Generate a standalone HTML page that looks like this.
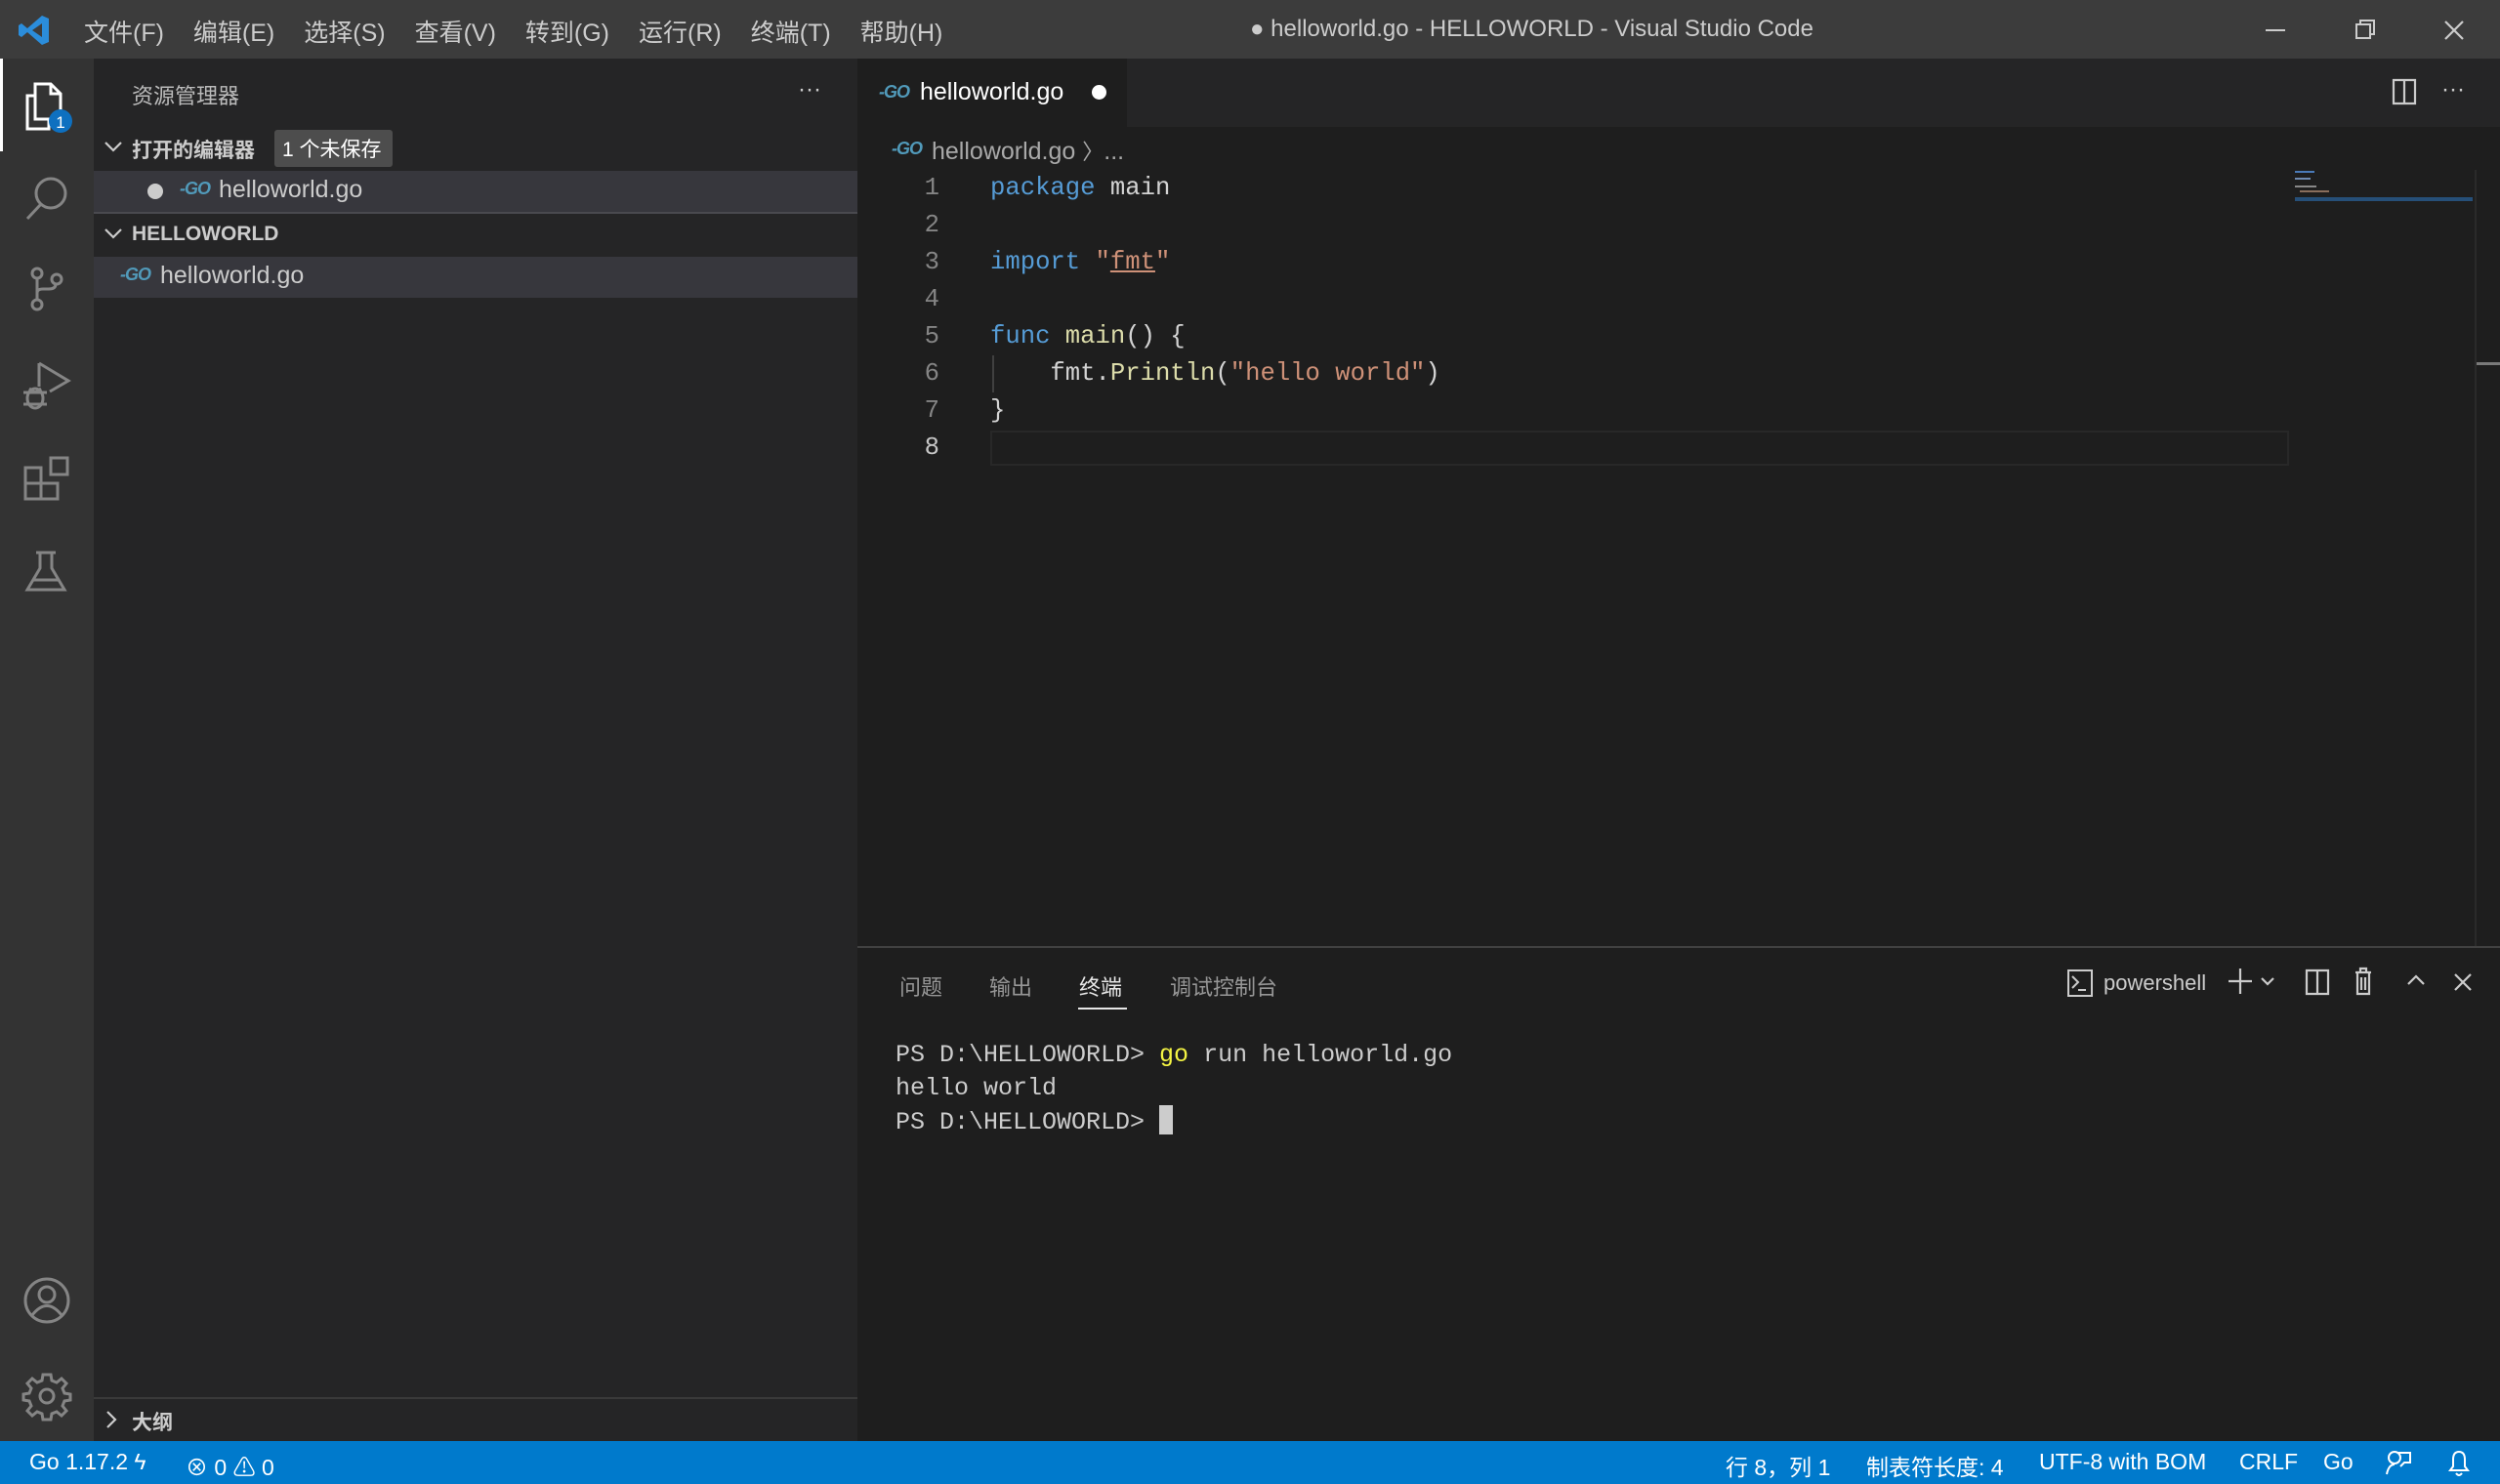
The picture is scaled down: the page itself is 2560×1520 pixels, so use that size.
<!DOCTYPE html>
<html><head><meta charset="utf-8"><style>
*{margin:0;padding:0;box-sizing:border-box}
body{width:2560px;height:1520px;overflow:hidden;background:#1e1e1e;font-family:"Liberation Sans","Noto Sans CJK SC",sans-serif;color:#ccc;position:relative}
.a{position:absolute;white-space:nowrap}
.mono{font-family:"Liberation Mono","Noto Sans CJK SC",monospace}
.go{font-style:italic;font-weight:bold;color:#519aba;font-size:18px;letter-spacing:-1px}
svg{position:absolute;overflow:visible}
</style></head><body>
<!-- title bar -->
<div class="a" style="left:0;top:0;width:2560px;height:60px;background:#3c3c3c"></div>
<svg style="left:18px;top:14px" width="34" height="34" viewBox="0 0 34 34"><path d="M25 2 L32 5 V29 L25 32 L10 19 L4 24 L1 22 V12 L4 10 L10 15 Z M25 10 L15 17 L25 24 Z" fill="#2b8ddb"/></svg>
<div class="a" style="left:86px;top:14px;font-size:25px;color:#ccc;word-spacing:0">
<span style="margin-right:30px">文件(F)</span><span style="margin-right:30px">编辑(E)</span><span style="margin-right:30px">选择(S)</span><span style="margin-right:30px">查看(V)</span><span style="margin-right:30px">转到(G)</span><span style="margin-right:30px">运行(R)</span><span style="margin-right:30px">终端(T)</span><span>帮助(H)</span></div>
<div class="a" style="left:1280px;top:16px;font-size:24px;color:#ccc">● helloworld.go - HELLOWORLD - Visual Studio Code</div>
<svg style="left:2320px;top:20px" width="220" height="24"><path d="M0 11 H20" stroke="#ccc" stroke-width="2"/><path d="M93 5 H107 V19 H93Z M97 5 V1 H111 V15 H107" stroke="#ccc" stroke-width="2" fill="none"/><path d="M184 2 L202 20 M202 2 L184 20" stroke="#ccc" stroke-width="2.2"/></svg>
<!-- activity bar -->
<div class="a" style="left:0;top:60px;width:96px;height:1416px;background:#333"></div>
<div class="a" style="left:0;top:60px;width:3px;height:95px;background:#fff"></div>
<svg style="left:24px;top:84px" width="48" height="52"><path d="M12 2 H28 L38 12 V38 H12Z M28 2 V12 H38" stroke="#fff" stroke-width="3" fill="none"/><path d="M12 14 H4 V48 H26 V38" stroke="#fff" stroke-width="3" fill="none"/><circle cx="38" cy="40" r="12" fill="#0e70c0"/><text x="38" y="47" fill="#fff" font-size="17" text-anchor="middle" font-family="Liberation Sans">1</text></svg>
<svg style="left:24px;top:178px" width="48" height="48" stroke="#858585" stroke-width="3" fill="none"><circle cx="28" cy="20" r="15"/><path d="M18 31 L4 46"/></svg>
<svg style="left:24px;top:272px" width="48" height="48" stroke="#858585" stroke-width="3" fill="none"><circle cx="14" cy="8" r="5"/><circle cx="14" cy="40" r="5"/><circle cx="34" cy="14" r="5"/><path d="M14 13 V35 M14 28 Q14 24 20 24 H26 Q33 24 33 19"/></svg>
<svg style="left:24px;top:370px" width="48" height="52" stroke="#858585" stroke-width="3" fill="none"><path d="M16 2 V26 M16 2 L46 20 L27 31"/><ellipse cx="12" cy="38" rx="8" ry="10"/><path d="M0 32 H24 M0 44 H24 M6 28 L12 32 M18 28 L12 32"/></svg>
<svg style="left:24px;top:467px" width="48" height="52" stroke="#858585" stroke-width="3" fill="none"><path d="M2 12 H18 V44 H2Z M2 28 H35 V44 H18"/><rect x="28" y="2" width="17" height="17"/></svg>
<svg style="left:24px;top:564px" width="48" height="50" stroke="#858585" stroke-width="3" fill="none"><path d="M13 2 H33 M17 2 V18 L4 40 H42 L29 18 V2 M10 30 H36"/></svg>
<svg style="left:24px;top:1308px" width="48" height="48" stroke="#858585" stroke-width="3" fill="none"><circle cx="24" cy="24" r="22"/><circle cx="24" cy="18" r="8"/><path d="M9 39 Q24 20 39 39"/></svg>
<svg style="left:22px;top:1404px" width="52" height="52" stroke="#858585" stroke-width="3" fill="none"><circle cx="26" cy="26" r="7"/><path d="M22 4 H30 L31 10 L36 12 L41 8 L46 13 L42 18 L44 23 L50 24 V30 L44 31 L42 36 L46 41 L41 46 L36 42 L31 44 L30 50 H22 L21 44 L16 42 L11 46 L6 41 L10 36 L8 31 L2 30 V24 L8 23 L10 18 L6 13 L11 8 L16 12 L21 10 Z"/></svg>
<!-- sidebar -->
<div class="a" style="left:96px;top:60px;width:782px;height:1416px;background:#252526"></div>
<div class="a" style="left:135px;top:81px;font-size:22px;color:#bbb">资源管理器</div>
<div class="a" style="left:817px;top:78px;font-size:24px;color:#ccc">···</div>
<svg style="left:106px;top:144px" width="20" height="14"><path d="M2 2 L10 10 L18 2" stroke="#ccc" stroke-width="2.2" fill="none"/></svg>
<div class="a" style="left:135px;top:138px;font-size:21px;color:#ccc;font-weight:bold">打开的编辑器</div>
<div class="a" style="left:281px;top:133px;width:121px;height:38px;background:#4d4d4d;border-radius:3px;font-size:21px;color:#fff;padding:4px 0 0 8px">1 个未保存</div>
<div class="a" style="left:96px;top:175px;width:782px;height:42px;background:#37373d"></div>
<div class="a" style="left:96px;top:217px;width:782px;height:2px;background:#4a4a4f"></div>
<div class="a" style="left:151px;top:188px;width:16px;height:16px;border-radius:50%;background:#ccc"></div>
<div class="a go" style="left:184px;top:183px">-GO</div>
<div class="a" style="left:224px;top:180px;font-size:25px;color:#ccc">helloworld.go</div>
<svg style="left:106px;top:233px" width="20" height="14"><path d="M2 2 L10 10 L18 2" stroke="#ccc" stroke-width="2.2" fill="none"/></svg>
<div class="a" style="left:135px;top:228px;font-size:21px;color:#ccc;font-weight:bold">HELLOWORLD</div>
<div class="a" style="left:96px;top:263px;width:782px;height:42px;background:#37373d"></div>
<div class="a go" style="left:123px;top:271px">-GO</div>
<div class="a" style="left:164px;top:268px;font-size:25px;color:#ccc">helloworld.go</div>
<div class="a" style="left:96px;top:1431px;width:782px;height:2px;background:#3a3a3a"></div>
<svg style="left:108px;top:1444px" width="14" height="20"><path d="M2 2 L10 10 L2 18" stroke="#ccc" stroke-width="2.2" fill="none"/></svg>
<div class="a" style="left:135px;top:1441px;font-size:21px;color:#ccc;font-weight:bold">大纲</div>
<!-- tabs -->
<div class="a" style="left:878px;top:60px;width:1682px;height:70px;background:#252526"></div>
<div class="a" style="left:878px;top:60px;width:276px;height:70px;background:#1e1e1e"></div>
<div class="a go" style="left:900px;top:84px">-GO</div>
<div class="a" style="left:942px;top:80px;font-size:25px;color:#fff">helloworld.go</div>
<div class="a" style="left:1118px;top:87px;width:15px;height:15px;border-radius:50%;background:#fff"></div>
<svg style="left:2449px;top:80px" width="28" height="28"><path d="M2 2 H24 V26 H2Z M13 2 V26" stroke="#ccc" stroke-width="2.2" fill="none"/></svg>
<div class="a" style="left:2500px;top:78px;font-size:24px;color:#ccc">···</div>
<!-- breadcrumb -->
<div class="a go" style="left:913px;top:142px;color:#519aba">-GO</div>
<div class="a" style="left:954px;top:138px;font-size:25px;color:#a9a9a9">helloworld.go <span style="font-size:22px">〉</span>...</div>
<!-- code -->
<div class="a" style="left:1014px;top:441px;width:1330px;height:36px;border:2px solid #282828"></div>
<div class="a" style="left:1016px;top:364px;width:2px;height:38px;background:#404040"></div>
<div class="a mono" style="left:900px;top:174px;width:62px;font-size:25.6px;line-height:38px;color:#858585;text-align:right">1<br>2<br>3<br>4<br>5<br>6<br>7<br><span style="color:#c6c6c6">8</span></div>
<div class="a mono" style="left:1014px;top:174px;font-size:25.6px;line-height:38px;color:#d4d4d4;white-space:pre"><span style="color:#569cd6">package</span> main

<span style="color:#569cd6">import</span> <span style="color:#ce9178">"<u style="text-decoration-color:#ce9178">fmt</u>"</span>

<span style="color:#569cd6">func</span> <span style="color:#dcdcaa">main</span>() {
    fmt.<span style="color:#dcdcaa">Println</span>(<span style="color:#ce9178">"hello world"</span>)
}
</div>
<!-- minimap -->
<div class="a" style="left:2350px;top:175px;width:20px;height:2px;background:#4a7ab8"></div>
<div class="a" style="left:2350px;top:182px;width:16px;height:2px;background:#6f8ab0"></div>
<div class="a" style="left:2350px;top:190px;width:22px;height:2px;background:#888"></div>
<div class="a" style="left:2355px;top:195px;width:30px;height:2px;background:#8a6e5c"></div>
<div class="a" style="left:2350px;top:202px;width:182px;height:4px;background:#264f78"></div>
<div class="a" style="left:2534px;top:174px;width:2px;height:796px;background:#2a2a2a"></div>
<div class="a" style="left:2536px;top:371px;width:24px;height:3px;background:#7a7a7a"></div>
<!-- panel -->
<div class="a" style="left:878px;top:969px;width:1682px;height:2px;background:#414141"></div>
<div class="a" style="left:921px;top:994px;font-size:22px;color:#969696">问题</div>
<div class="a" style="left:1013px;top:994px;font-size:22px;color:#969696">输出</div>
<div class="a" style="left:1105px;top:994px;font-size:22px;color:#e7e7e7">终端</div>
<div class="a" style="left:1104px;top:1032px;width:50px;height:2px;background:#e7e7e7"></div>
<div class="a" style="left:1198px;top:994px;font-size:22px;color:#969696">调试控制台</div>
<svg style="left:2116px;top:992px" width="30" height="30"><path d="M2 2 H26 V28 H2Z M6 8 L12 14 L6 20 M12 22 H20" stroke="#ccc" stroke-width="2" fill="none"/></svg>
<div class="a" style="left:2154px;top:994px;font-size:22px;color:#ccc">powershell</div>
<svg style="left:2280px;top:990px" width="240" height="36" stroke="#ccc" stroke-width="2.2" fill="none"><path d="M14 2 V28 M2 15 H26"/><path d="M36 12 L42 18 L48 12"/><path d="M82 4 H104 V28 H82Z M93 4 V28"/><path d="M132 6 H148 M137 6 V2 H143 V6 M134 6 V28 H146 V6 M138 11 V24 M142 11 V24"/><path d="M186 18 L194 10 L202 18"/><path d="M234 8 L250 24 M250 8 L234 24"/></svg>
<div class="a mono" style="left:917px;top:1064px;font-size:25px;line-height:34px;color:#ccc;white-space:pre">PS D:\HELLOWORLD&gt; <span style="color:#f5f543">go</span> run helloworld.go
hello world
PS D:\HELLOWORLD&gt; <span style="display:inline-block;width:14px;height:30px;background:#ccc;vertical-align:-6px"></span></div>
<!-- status bar -->
<div class="a" style="left:0;top:1476px;width:2560px;height:44px;background:#007acc"></div>
<div class="a" style="left:30px;top:1484px;font-size:23px;color:#fff">Go 1.17.2 ϟ</div>
<div class="a" style="left:190px;top:1484px;font-size:23px;color:#fff">⊗ 0 ⚠ 0</div>
<div class="a" style="left:1767px;top:1484px;font-size:23px;color:#fff">行 8，列 1</div>
<div class="a" style="left:1911px;top:1484px;font-size:23px;color:#fff">制表符长度: 4</div>
<div class="a" style="left:2088px;top:1484px;font-size:23px;color:#fff">UTF-8 with BOM</div>
<div class="a" style="left:2293px;top:1484px;font-size:23px;color:#fff">CRLF</div>
<div class="a" style="left:2379px;top:1484px;font-size:23px;color:#fff">Go</div>
<svg style="left:2442px;top:1484px" width="30" height="30" stroke="#fff" stroke-width="2" fill="none"><circle cx="10" cy="9" r="6"/><path d="M2 26 Q4 16 10 16 M14 4 H26 V14 H20 L16 18"/></svg>
<svg style="left:2505px;top:1484px" width="26" height="30" stroke="#fff" stroke-width="2" fill="none"><path d="M4 22 H22 L19 18 V11 Q19 3 13 3 Q7 3 7 11 V18 Z M10 25 Q13 29 16 25"/></svg>
</body></html>
